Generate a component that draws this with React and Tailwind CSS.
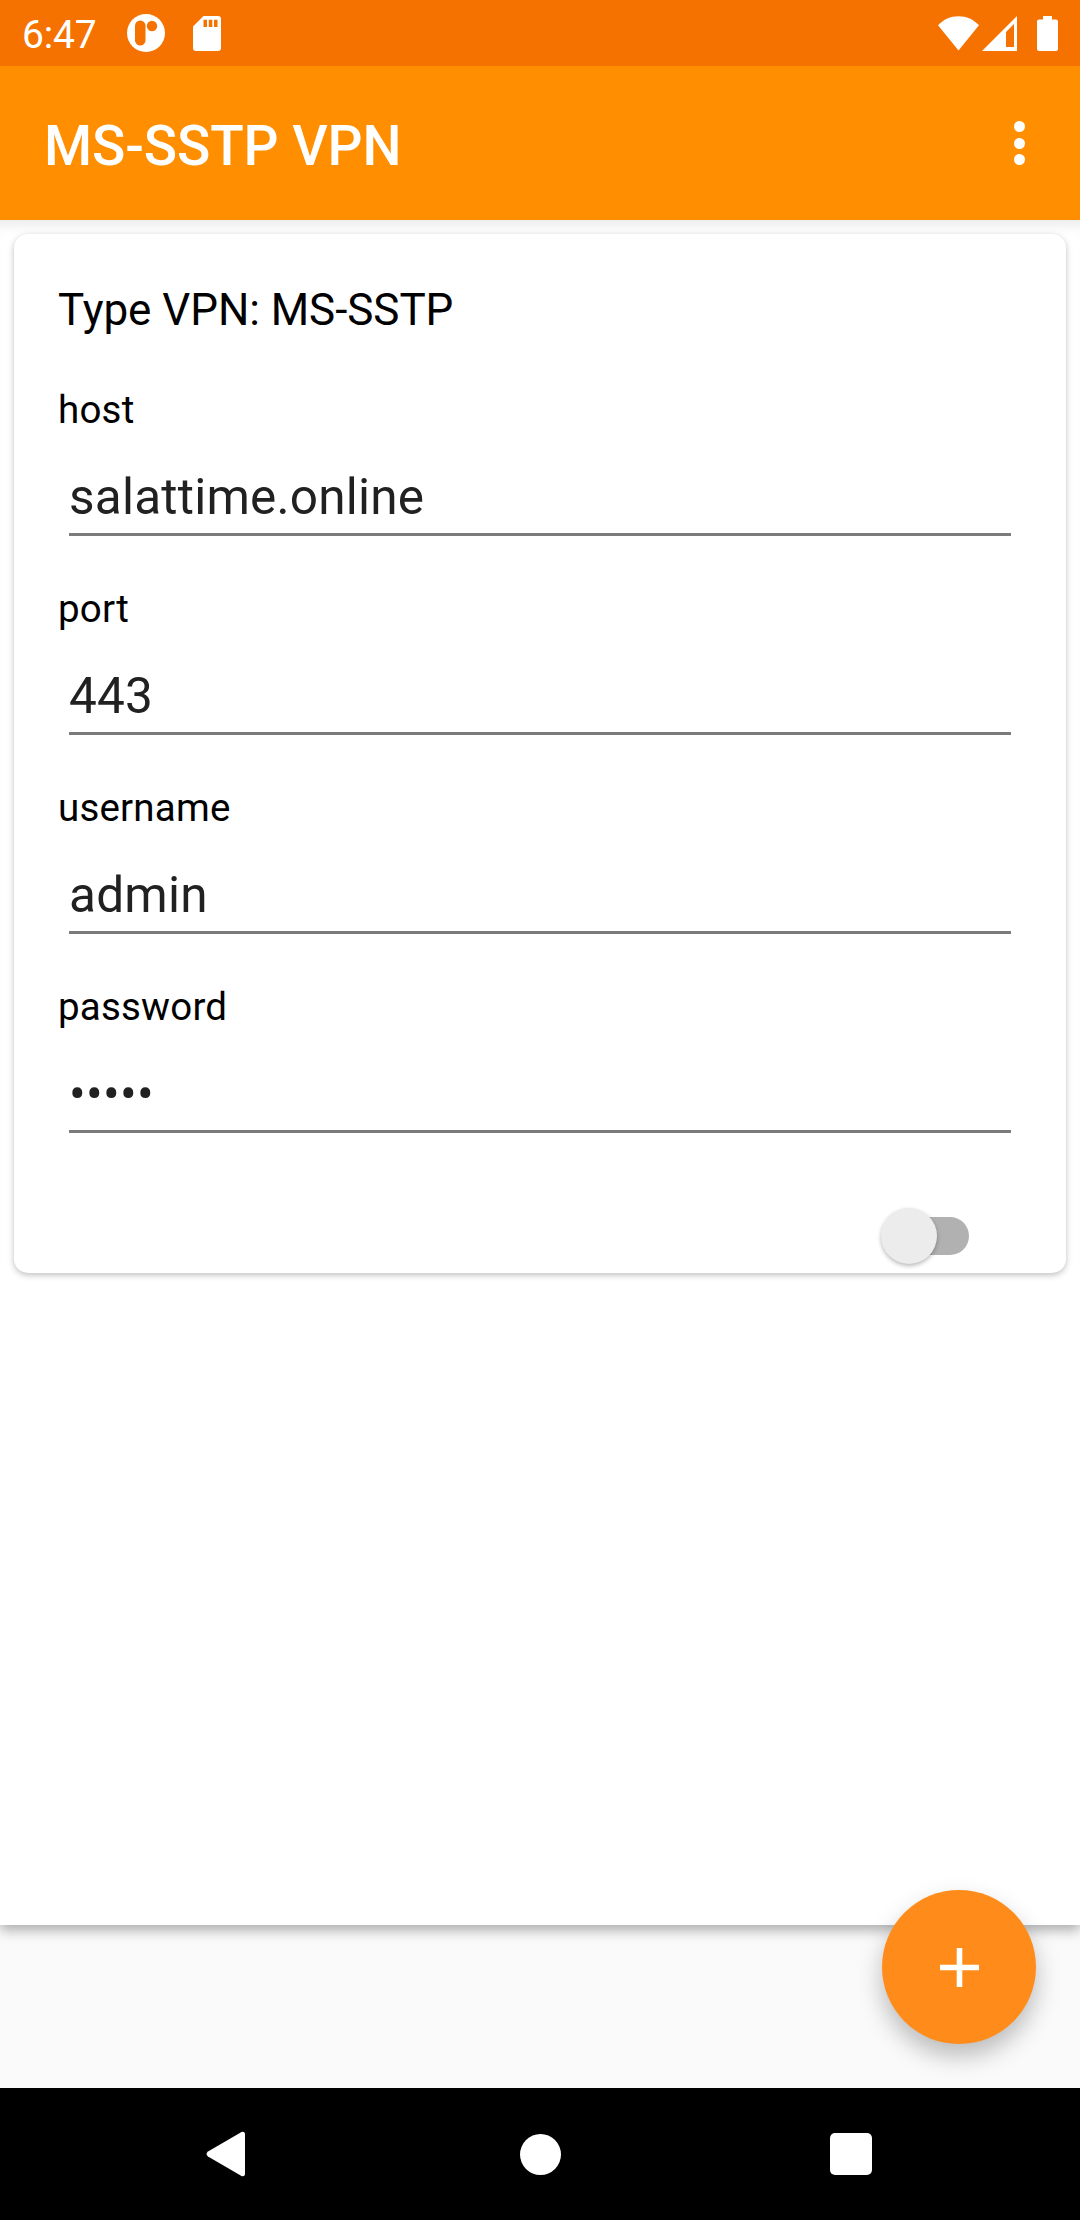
const fields = [
  { label: 'host', value: 'salattime.online', type: 'text' },
  { label: 'port', value: '443', type: 'text' },
  { label: 'username', value: 'admin', type: 'text' },
  { label: 'password', value: '•••••', type: 'password' },
]

const StatusBar = () => (
  <div className="flex items-center justify-between h-[66px] bg-[#f57200] text-white">
    <div className="flex items-center h-full pl-[22px]">
      <span className="w-[105px] pt-[3px] text-[39px] leading-[60px] tracking-[-0.2px]">6:47</span>

      {/* Notification icons */}
      <svg className="w-[38px] h-[38px]" viewBox="0 0 38 38">
        <circle cx="19" cy="19" r="19" fill="#fff" />
        <rect x="8" y="6.5" width="10.5" height="25" rx="5.2" fill="#f57200" />
        <circle cx="25" cy="12" r="5.2" fill="#f57200" />
      </svg>
      <svg className="w-7 h-[35px] ml-[28px]" viewBox="0 0 28 35">
        <path d="M10.5 0H25a3 3 0 0 1 3 3v29a3 3 0 0 1-3 3H3a3 3 0 0 1-3-3V10.5z" fill="#fff" />
        <path d="M10.5 3.8H14V11h-3.5zM15.8 3.8h3.5V11h-3.5zM21 3.8h3.5V11H21z" fill="#f57200" />
      </svg>
    </div>

    {/* Wifi, signal, battery */}
    <div className="flex items-center h-full pr-[22px]">
      <svg className="w-[41px] h-[35px]" viewBox="0 0 41 35">
        <path d="M20.5 34.5L0 9.3C5.5 3.5 12.5.3 20.5.3S35.5 3.5 41 9.3z" fill="#fff" />
      </svg>
      <svg className="w-[35px] h-[35px] ml-[3px]" viewBox="0 0 35 35">
        <path fillRule="evenodd" d="M35 0v35H0zM32 8L24 16v15h8z" fill="#fff" />
      </svg>
      <svg className="w-[21px] h-[35px] ml-5" viewBox="0 0 21 35">
        <path d="M6 0h9v3.5h4a2 2 0 0 1 2 2V33a2 2 0 0 1-2 2H2a2 2 0 0 1-2-2V5.5a2 2 0 0 1 2-2h4z" fill="#fff" />
      </svg>
    </div>
  </div>
)

const AppBar = () => (
  <header className="relative z-10 flex items-center justify-between h-[154px] pl-[44px] pr-[55px] bg-[#ff8f00]">
    <h1 className="text-[55px] leading-[64px] font-medium tracking-[-0.1px] text-white pt-[5px]">MS-SSTP VPN</h1>
    <button className="flex flex-col gap-[5.5px]">
      <span className="w-[11px] h-[11px] rounded-full bg-white" />
      <span className="w-[11px] h-[11px] rounded-full bg-white" />
      <span className="w-[11px] h-[11px] rounded-full bg-white" />
    </button>
  </header>
)

const Field = ({ label, value, type }) => (
  <div className="h-[199px]">
    <p className="text-[38.5px] leading-[52px] tracking-[0.2px] text-black">{label}</p>
    <div className="flex items-end h-[100px] ml-[11px] mr-[41px] border-b-[3px] border-[#7b7b7b] text-[#212121]">
      {type === 'password' ? (
        <span className="text-[49.5px] leading-[58px] tracking-[0.3px] pb-[7px]">{value}</span>
      ) : (
        <span className="text-[49.5px] leading-[58px] tracking-[0.22px] pb-[7px]">{value}</span>
      )}
    </div>
  </div>
)

const Toggle = () => (
  <div className="relative flex items-center justify-end w-[88px] h-14">
    <span className="w-[60px] h-[38px] rounded-full bg-[#b1b1b1]" />
    <span className="absolute left-0 top-0 w-14 h-14 rounded-full bg-[#ececec] shadow-[0_2px_4px_rgba(0,0,0,0.28)]" />
  </div>
)

const NavBar = () => (
  <nav className="flex items-center justify-between h-[132px] pl-[206px] pr-[208px] bg-black">
    <svg className="w-[40px] h-[46px]" viewBox="0 0 40 46">
      <path d="M2 20.5L35.5 1Q39 0 39 3.5v39Q39 46 35.5 45L2 25.5Q-1 23 2 20.5z" fill="#fff" />
    </svg>
    <span className="w-[41px] h-[41px] ml-1 rounded-full bg-white" />
    <span className="w-[42px] h-[42px] rounded-[5px] bg-white" />
  </nav>
)

const App = () => {
  return (
    <div className="relative flex flex-col w-[1080px] h-[2220px] overflow-hidden bg-[#fafafa] font-['Roboto',sans-serif]">
      <StatusBar />
      <AppBar />

      <main className="h-[1705px] px-3.5 pt-3.5 bg-white shadow-[0_5px_12px_rgba(0,0,0,0.32),inset_0_14px_12px_-8px_rgba(0,0,0,0.08)]">
        <section className="h-[1039px] pl-[44px] pr-[14px] rounded-[14px] bg-white shadow-[0_2px_6px_rgba(0,0,0,0.26)]">
          <h2 className="pt-[50px] text-[44px] leading-[52px] tracking-[-0.05px] text-black">Type VPN: MS-SSTP</h2>
          <div className="pt-[48px]">
            {fields.map(field => (
              <Field key={field.label} {...field} />
            ))}
          </div>
          <div className="flex justify-end pr-[83px] pt-[28px]">
            <Toggle />
          </div>
        </section>
      </main>

      <div className="flex-1" />
      <NavBar />

      {/* Add button */}
      <button className="absolute right-[44px] bottom-[176px] z-20 flex items-center justify-center w-[154px] h-[154px] rounded-full bg-[#ff8c1a] shadow-[0_12px_24px_rgba(0,0,0,0.26)]">
        <svg className="w-[39px] h-[39px]" viewBox="0 0 39 39">
          <path d="M16.7 0h5.6v16.7H39v5.6H22.3V39h-5.6V22.3H0v-5.6h16.7z" fill="#fff" />
        </svg>
      </button>
    </div>
  )
}

export default App
